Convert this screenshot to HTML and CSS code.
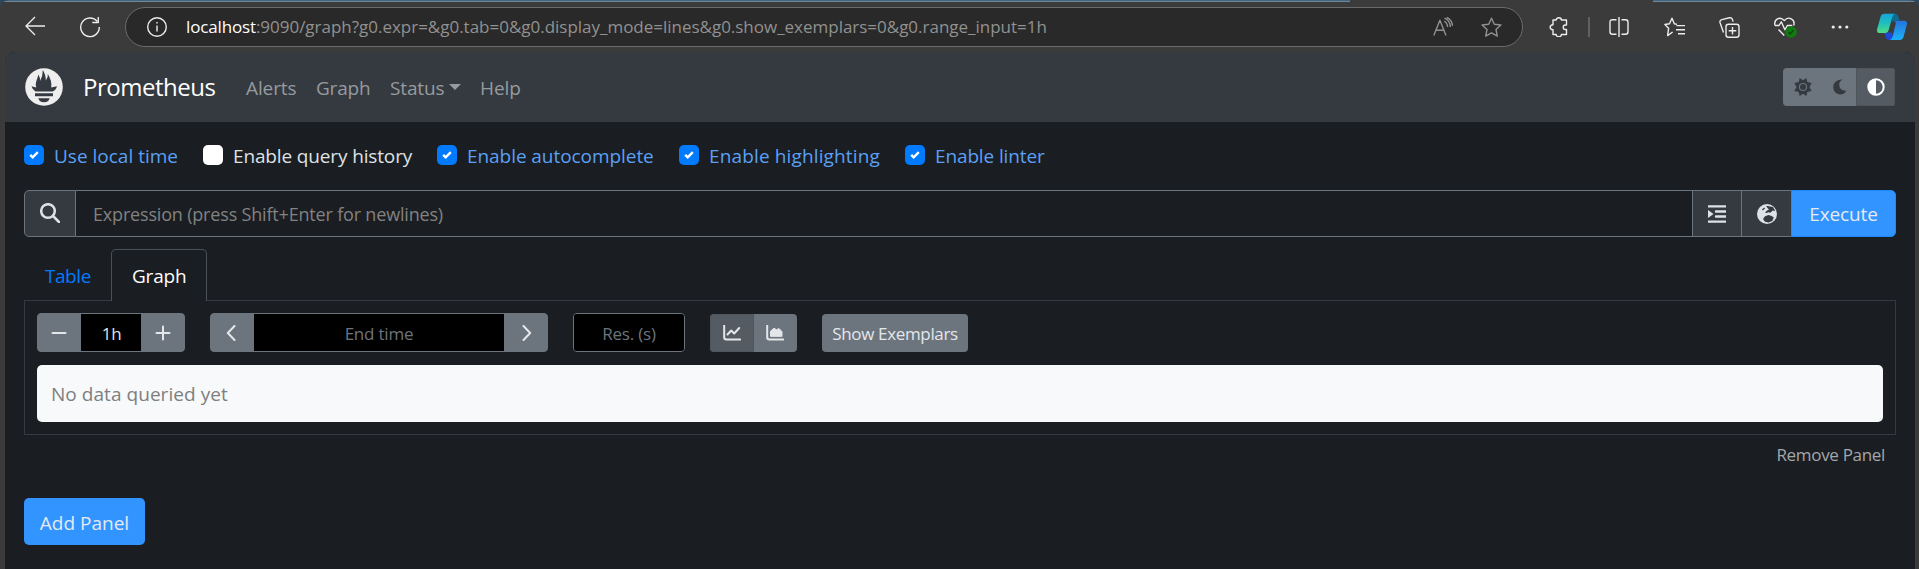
FILE: index.html
```
<!DOCTYPE html>
<html lang="en">
<head>
<meta charset="utf-8">
<title>Prometheus Time Series Collection and Processing Server</title>
<link rel="stylesheet" href="styles.css">
</head>
<body>
<div class="window">
<div class="tabstrip"><i class="strip-left"></i><i class="strip-right"></i></div>
<header class="toolbar">
  <svg class="back" width="20" height="20" viewBox="0 0 20 20"><path d="M10 1 1 10l9 9M1.2 10H20"/></svg>
  <svg class="reload" width="22" height="22" viewBox="0 0 22 22"><path d="M18.2 5.4A9.3 9.3 0 1 0 20.3 11M19.3 1v5.5h-6"/></svg>
  <div class="omnibox">
    <svg width="20" height="20" viewBox="0 0 20 20"><circle cx="10" cy="10" r="9.3"/><path d="M10 8.6v6M10 5v1.6"/></svg>
    <div class="url"><span class="host">localhost</span><span class="path">:9090/graph?g0.expr=&amp;g0.tab=0&amp;g0.display_mode=lines&amp;g0.show_exemplars=0&amp;g0.range_input=1h</span></div>
    <svg class="dim read" width="20" height="20" viewBox="0 0 20 20"><path d="M.8 18.4 6.9 3.2 13 18.4M3 13.2h7.8M11.3 4q3 2 3.4 6M11.5 1.2Q17 3.5 17.4 10M13.7.4Q19.2 3 19.6 9"/></svg>
    <svg class="dim star" width="21" height="21" viewBox="0 0 21 21"><path d="m10.5 1.2 2.8 6 6.6.8-4.9 4.5 1.3 6.6-5.8-3.2-5.8 3.2L6 12.500 1.100 8l6.600-.8z"/></svg>
  </div>
  <svg class="ext" width="20" height="20" viewBox="0 0 20 20"><path d="M4 3h3.200c0-3 5.200-3 5.200 0H17.500v5h-1.200c-2.800 0-2.800 4.500 0 4.500h1.200v5H12.400c0 3-5.200 3-5.200 0H4v-4.700c-3.800 0-3.800-5 0-5z"/></svg>
  <i class="sep"></i>
  <svg class="split" width="20" height="20" viewBox="0 0 20 20"><path d="M7.500 2.700H3.500Q1 2.700 1 5.200v9.600q0 2.500 2.500 2.500h4M12.500 2.700h4Q19 2.700 19 5.200v9.600q0 2.500-2.500 2.500h-4M10 0v20"/></svg>
  <svg class="favs" width="21" height="20" viewBox="0 0 21 20"><path d="M13 7.400 10.300 6.800 8 1.200 5.500 6.800.9 7.500l3.700 3.800-1 7.300L8.600 15M12.500 8.600H21M12 12.700h9M14 16.800h7"/></svg>
  <svg class="coll" width="21" height="21" viewBox="0 0 21 21"><rect x="7" y="7.300" width="13" height="13" rx="2.500"/><path d="M13.500 10v7.600M9.700 13.800h7.600M4.500 15.500 1 5.500Q.5 3.300 2.800 2.600L10.500.8q2.200-.4 3 1.800l.6 2"/></svg>
  <svg class="heart" width="23" height="21" viewBox="0 0 23 21"><path d="M1 8.500C-.5 2.500 6-1.500 10.300 3.600 14.500-1.500 21.500 2.500 19.700 8.500M1 8.500h4l2.300-3.700 3.600 8 2.400-4.300h5M4.500 12.500l5.800 6"/><circle class="ok" cx="17" cy="15" r="5.800"/><path class="tick" d="m14.300 15.300 1.800 1.700 3.400-3.700"/></svg>
  <svg class="dots" width="18" height="6" viewBox="0 0 18 6"><circle cx="2.200" cy="3" r="1.600"/><circle cx="9" cy="3" r="1.600"/><circle cx="15.800" cy="3" r="1.600"/></svg>
  <svg class="copilot" width="30" height="28" viewBox="0 0 30 28">
    <defs>
      <linearGradient id="ga" x1="0" y1="0" x2="0" y2="1"><stop offset="0" stop-color="#16a5dc"/><stop offset=".5" stop-color="#1fc0bd"/><stop offset="1" stop-color="#52dc84"/></linearGradient>
      <linearGradient id="gb" x1="0" y1="0" x2="0" y2="1"><stop offset="0" stop-color="#2474dc"/><stop offset="1" stop-color="#1bb2fa"/></linearGradient>
    </defs>
    <path fill="#0b6d94" d="M13 .8h4.500q3 0 3.900 3l1 3.700h-4q-2 0-2.700 2z"/>
    <path fill="#1d48d8" d="M7 19.500h8l1.800 7.500H12q-2.500 0-3.300-3z"/>
    <path fill="url(#ga)" d="M7.600.8H18q-2 .5-2.800 3.400L11.700 17q-.9 3-3.700 3H3q-3.700 0-2.800-4L3.500 4Q4.400.8 7.600.8z"/>
    <path fill="url(#gb)" d="M19 7.700h8q3.800 0 2.800 4L26.500 24q-.9 3-4 3H12.600q2.300-.7 3-3.300l3-12.500q.6-3-1.800-3.200z"/>
  </svg>
</header>
<div class="page">
  <nav class="navbar">
    <svg class="logo" width="38" height="38" viewBox="0 0 38 38"><circle cx="19" cy="19" r="18.800" fill="#eee"/><g fill="#343a40"><path d="M11.300 19.500C9.600 15 12.500 11.500 13.300 6.500q2 3 1.700 6.500Q18 8 17.800 2q3 4.500 3 10.500Q23.400 9.500 22.800 6q4.500 7 3.400 13.500l5.800-1.200q-1.300 4.500-4.500 5.200h-17Q7.500 22 6.500 18.300z"/><path d="M10 25.300h18v3H10zM13.300 30.300h11.400q-1 4-5.700 4t-5.700-4z"/></g></svg>
    <a class="brand">Prometheus</a>
    <a class="alerts">Alerts</a><a class="graphlink">Graph</a><a class="status">Status<i class="caret"></i></a><a class="help">Help</a>
    <div class="theme">
      <svg class="sun" width="18" height="18" viewBox="-9 -9 18 18"><path d="M-3.400-9 0-6.800 3.400-9l.9 4 4.400 1L6.500 0l2.200 4-4.400 1-.9 4L0 6.800-3.400 9l-.9-4-4.400-1L-6.500 0l-2.200-4 4.400-1z"/><circle r="4.100"/><circle class="core" r="3"/></svg>
      <svg class="moon" width="14" height="16" viewBox="0 0 14 16"><path d="M9.500.3Q4.300 4 7 8.900q2.300 3.500 6.400 2.800Q10.500 16 6.500 15.500.500 14.300.2 8 .7.800 9.500.300z"/></svg>
      <div class="auto"><svg width="18" height="18" viewBox="0 0 18 18"><circle cx="9" cy="9" r="7.700"/><path d="M9 1v16A8 8 0 0 1 9 1z"/></svg></div>
    </div>
  </nav>
  <main>
    <div class="options">
      <label class="on o1"><i class="box"><svg width="10" height="8" viewBox="0 0 10 8"><path d="m1.200 3.800 2.500 2.500L8.800 1.200"/></svg></i><span>Use local time</span></label>
      <label class="o2"><i class="box"></i><span>Enable query history</span></label>
      <label class="on o3"><i class="box"><svg width="10" height="8" viewBox="0 0 10 8"><path d="m1.200 3.800 2.500 2.500L8.800 1.200"/></svg></i><span>Enable autocomplete</span></label>
      <label class="on o4"><i class="box"><svg width="10" height="8" viewBox="0 0 10 8"><path d="m1.200 3.800 2.500 2.500L8.800 1.200"/></svg></i><span>Enable highlighting</span></label>
      <label class="on o5"><i class="box"><svg width="10" height="8" viewBox="0 0 10 8"><path d="m1.200 3.800 2.500 2.500L8.800 1.200"/></svg></i><span>Enable linter</span></label>
    </div>
    <div class="query">
      <div class="addon lens"><svg width="20" height="20" viewBox="0 0 20 20"><circle cx="8" cy="8" r="6.800"/><path d="m13 13 6 6"/></svg></div>
      <div class="expr"><span>Expression (press Shift+Enter for newlines)</span></div>
      <div class="addon fmt"><svg width="18" height="18" viewBox="0 0 18 18"><path d="M0 1.400h18M8 6.500h10M8 11.500h10M0 16.600h18"/><path class="fill" d="M0 5v8l5.500-4z"/></svg></div>
      <div class="addon globe"><svg width="20" height="20" viewBox="0 0 20 20"><circle cx="10" cy="10" r="10"/><path d="M9 1.800 16 3l2.300 4-2.500-.6-2.500 2.300-2-.5L9.800 9 8 8.500 9.800 6.800 12 5.500 10.500 4zM5 5.200l2.200-1.600.8 1-2.200 1.800zM8 12.200l3.500-1.200 2.500.8 2.800 1.500-1.500 3.600-3.800 1.600-3.500-.8L6 15z"/></svg></div>
      <button class="primary execute">Execute</button>
    </div>
    <div class="tabs"><a class="tab">Table</a><a class="tab active">Graph</a></div>
    <section class="panel">
      <div class="controls">
        <div class="group range"><b><svg width="16" height="16" viewBox="0 0 16 16"><path d="M1.500 8h13"/></svg></b><span class="field">1h</span><b><svg width="16" height="16" viewBox="0 0 16 16"><path d="M1.500 8h13M8 1.500v13"/></svg></b></div>
        <div class="group time"><b class="prev"><svg width="10" height="16" viewBox="0 0 10 16"><path d="M8.500 1 1.800 8l6.700 7"/></svg></b><span class="field">End time</span><b class="next"><svg width="10" height="16" viewBox="0 0 10 16"><path d="m1.500 1 6.700 7-6.700 7"/></svg></b></div>
        <div class="group res"><span class="field">Res. (s)</span></div>
        <div class="group modes"><b class="sel"><svg width="18" height="16" viewBox="0 0 18 16"><path d="M1.200.5v11.800q0 2.200 2.200 2.200h13.800M4.500 9.500l3.700-4 3 3 5-5.500"/></svg></b><b class="stack"><svg width="18" height="16" viewBox="0 0 18 16"><path d="M1.200.5v11.800q0 2.200 2.200 2.200h13.800"/><path class="solid" d="M4.500 11V6.200L8 3.200l2.500 1.600L13 3.500l3 3.200V11z"/></svg></b></div>
        <button class="exemplars">Show Exemplars</button>
      </div>
      <div class="alert">No data queried yet</div>
    </section>
    <div class="remove"><a>Remove Panel</a></div>
    <button class="primary add">Add Panel</button>
  </main>
</div>
</div>
</body>
</html>
```
FILE: styles.css
```
* { box-sizing: border-box; }
body {
  margin: 0;
  background: #2e4657;
  color: #dee2e6;
  font: 19px/28px "Open Sans", "Noto Sans", sans-serif;
}
svg { display: block; flex: none; }
button { font: inherit; border: 0; padding: 0; }
.window {
  height: 569px;
  background: #3b3b3b;
  border-radius: 9px 9px 0 0;
  overflow: hidden;
}

/* Browser chrome */
.tabstrip { height: 2px; display: flex; justify-content: space-between; }
.tabstrip i { background: #41657f; border-bottom: 1px solid #6f8696; }
.strip-left { width: 1350px; }
.strip-right { width: 266px; }
.toolbar { height: 50px; display: flex; align-items: center; padding-left: 25px; }
.toolbar svg { fill: none; stroke: #ececec; stroke-width: 1.4; stroke-linejoin: round; }
.back { margin-top: -2px; }
.reload { margin-left: 34px; }
.omnibox {
  width: 1398px;
  height: 40px;
  margin-left: 24px;
  padding: 0 20px 0 21px;
  display: flex;
  align-items: center;
  background: #292929;
  border: 1px solid #6b6b6b;
  border-radius: 20px;
}
.url { flex: 1; padding-left: 19px; font-size: 17px; color: #919191; white-space: nowrap; }
.host { color: #fff; letter-spacing: -.15px; }
.path { letter-spacing: -.015px; }
.toolbar .dim { stroke: #919191; }
.star { margin-left: 28px; }
.ext { margin-left: 26px; }
.sep { width: 2px; height: 20px; margin-left: 19px; background: #606060; }
.split { margin-left: 19px; }
.favs { margin-left: 35px; }
.coll { margin-left: 34px; }
.heart { margin-left: 34px; }
.toolbar .ok { fill: #107c10; stroke: none; }
.toolbar .tick { stroke: #163d16; }
.toolbar .dots { margin-left: 34px; fill: #ececec; stroke: none; }
.toolbar .copilot { margin-left: 28px; stroke: none; }

/* Navigation */
.page {
  height: 517px;
  margin: 0 4px 0 5px;
  background: #1a1d21;
  border-radius: 10px 10px 0 0;
  overflow: hidden;
}
.navbar {
  height: 70px;
  padding: 0 20px;
  display: flex;
  align-items: center;
  background: #343a40;
  color: #979a9e;
}
.logo { margin-top: -1px; }
.navbar a { padding-top: 2px; white-space: nowrap; letter-spacing: -.1px; }
.navbar .brand { width: 134px; margin-left: 20px; padding-top: 0; color: #fff; font-size: 24px; letter-spacing: -.47px; }
.alerts { width: 50px; margin-left: 29px; }
.navbar .graphlink { width: 54px; margin-left: 20px; letter-spacing: -.2px; }
.navbar .status { width: 70px; margin-left: 20px; display: flex; align-items: center; letter-spacing: -.15px; }
.caret { margin: -2px 0 0 5px; border: 6px solid transparent; border-top-color: #979a9e; border-bottom: 0; }
.help { margin-left: 20px; }
.theme {
  width: 112px;
  height: 38px;
  margin-left: auto;
  display: flex;
  align-items: center;
  background: #6c757d;
  border-radius: 4px;
  overflow: hidden;
  fill: #343a40;
}
.sun { margin-left: 11px; }
.sun circle { fill: #6c757d; }
.sun .core { fill: #343a40; }
.moon { margin-left: 21px; }
.auto {
  width: 39px;
  height: 38px;
  margin-left: auto;
  display: grid;
  place-items: center;
  background: #545b62;
  border: 1px solid #4e555b;
  fill: #fff;
}
.auto circle { fill: none; stroke: #fff; stroke-width: 2; }

/* Options */
main { padding: 22px 19px 0; }
.options { height: 22px; display: flex; align-items: center; }
.options label { display: flex; align-items: center; white-space: nowrap; }
.options span { padding-top: 2px; }
.box {
  width: 20px;
  height: 20px;
  margin-right: 10px;
  display: grid;
  place-items: center;
  background: #fff;
  border-radius: 5px;
}
.on { color: #5ba0f5; }
.on .box { background: #007bff; }
.box svg { fill: none; stroke: #fff; stroke-width: 2.400; }
.o1 { width: 179px; }
.o2 { width: 234px; letter-spacing: -.14px; }
.o3 { width: 242px; letter-spacing: -.06px; }
.o4 { width: 226px; letter-spacing: .14px; }
.o5 { letter-spacing: -.13px; }

/* Query bar */
.query { height: 47px; margin-top: 24px; display: flex; }
.addon {
  width: 50px;
  display: grid;
  place-items: center;
  background: #343a40;
  border: 1px solid #6c757d;
}
.lens { width: 52px; border-radius: 5px 0 0 5px; }
.lens svg { margin-top: -2px; fill: none; stroke: #dee2e6; stroke-width: 2.500; stroke-linecap: round; }
.expr {
  flex: 1;
  padding: 0 17px;
  display: flex;
  align-items: center;
  border: solid #6c757d;
  border-width: 1px 0;
  color: #828282;
  font-size: 18px;
  letter-spacing: -.18px;
}
.fmt svg { fill: none; stroke: #dee2e6; stroke-width: 2.400; stroke-linecap: round; }
.fmt .fill { fill: #dee2e6; stroke: none; }
.globe { width: 49px; border-width: 1px 0; }
.globe circle { fill: #dee2e6; }
.globe path { fill: #343a40; }
.primary { background: #3294ff; color: #e4eaf1; }
.execute { width: 105px; border: 1px solid #1d89ff; border-radius: 0 5px 5px 0; letter-spacing: -.15px; }

/* Tabs and panel */
.tabs { position: relative; z-index: 1; display: flex; margin-top: 12px; }
.tab {
  width: 87px;
  height: 52px;
  padding: 3px 0 0 21px;
  line-height: 48px;
  color: #007bff;
  letter-spacing: -.45px;
}
.active {
  width: 96px;
  margin-bottom: -1px;
  padding-left: 20px;
  background: #1a1d21;
  border: 1px solid #495057;
  border-bottom: 0;
  border-radius: 5px 5px 0 0;
  line-height: 47px;
  color: #fff;
  letter-spacing: -.2px;
}
.panel { height: 135px; margin-top: -1px; padding: 12px; border: 1px solid #343a40; }
.controls { display: flex; align-items: flex-end; height: 39px; }
.group {
  height: 39px;
  display: flex;
  background: #6c757d;
  border: 1px solid #6c757d;
  border-radius: 4px;
  overflow: hidden;
}
.group b { flex: none; width: 43px; display: grid; place-items: center; }
.group svg { fill: none; stroke: #e4e7ea; stroke-width: 2; stroke-linecap: round; stroke-linejoin: round; }
.group .prev { padding-right: 4px; }
.group .next { padding-left: 2px; }
.group .stack { padding-right: 2px; }
.field {
  flex: 1;
  background: #000;
  color: #6c757d;
  font-size: 17px;
  line-height: 39px;
  text-align: center;
  letter-spacing: -.2px;
}
.range { width: 148px; }
.range b:first-child { padding-right: 2px; }
.range .field { padding-left: 1px; color: #dee2e6; }
.time { width: 338px; margin-left: 25px; }
.res { width: 112px; margin-left: 25px; }
.modes { width: 87px; height: 38px; margin-left: 25px; border: 0; }
.modes .sel { width: 44px; background: #545b62; border: 1px solid #4e555b; border-radius: 4px 0 0 4px; }
.group .solid { fill: #e4e7ea; stroke-width: 1; }
.exemplars {
  width: 146px;
  height: 38px;
  margin-left: 25px;
  padding-top: 1px;
  background: #6c757d;
  border-radius: 4px;
  color: #e4e7ea;
  font-size: 17px;
  letter-spacing: -.34px;
}
.alert {
  height: 57px;
  margin-top: 13px;
  padding: 1px 0 0 14px;
  background: #f8f9fa;
  border-radius: 5px;
  line-height: 57px;
  color: #7d7f80;
  letter-spacing: .05px;
}
.remove { padding: 6px 11px 0 0; text-align: right; font-size: 17px; color: #a3a7aa; letter-spacing: -.32px; }
.add { width: 121px; height: 47px; margin-top: 29px; padding-top: 2px; display: block; border-radius: 5px; }
```
